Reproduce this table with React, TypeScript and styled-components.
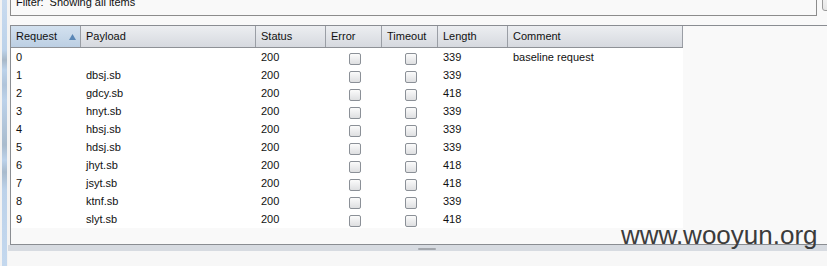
import React from "react";
import styled, { createGlobalStyle } from "styled-components";

const GlobalStyle = createGlobalStyle`
  html, body { margin: 0; padding: 0; background: #f9f9f9; }
  body { font-family: "Liberation Sans", Arial, sans-serif; font-size: 11px; color: #111; }
`;

const COLS = "70px 175px 70px 56px 56px 70px 175px";

const Page = styled.div`
  position: relative;
  width: 827px;
  height: 266px;
  overflow: hidden;
  display: flex;
  background: #f9f9f9;
`;

const LeftStrip = styled.div`
  width: 10px;
  flex: none;
  padding-left: 2px;
  box-sizing: border-box;
  background: #f3f3f3;
  display: flex;
`;

const StripBar = styled.div`
  width: 5px;
  background: linear-gradient(
    to bottom,
    #c9dbef 0px,
    #bcd2ea 50px,
    #a8b8c8 60px,
    #bcd2ea 70px,
    #b0c4da 85px,
    #bcd2ea 100px,
    #a9bbcd 145px,
    #bcd2ea 160px,
    #a9bbcd 172px,
    #bcd2ea 190px,
    #c4d8ee 266px
  );
`;

const Main = styled.div`
  flex: 1;
  display: flex;
  flex-direction: column;
  min-width: 0;
`;

const TopRow = styled.div`
  display: flex;
  align-items: flex-start;
  margin-top: -8px;
  height: 24px;
  flex: none;
`;

const FilterBox = styled.div`
  width: 807px;
  height: 24px;
  box-sizing: border-box;
  border: 1px solid #8c8c8c;
  background: #f9f9f9;
  padding: 3px 0 0 5px;
  line-height: 13px;
  white-space: pre;
  flex: none;
`;

const SideButton = styled.div`
  margin-left: 5px;
  width: 20px;
  height: 19px;
  box-sizing: border-box;
  border: 1px solid #9a9a9a;
  border-radius: 3px;
  background: linear-gradient(#f6f6f6, #e6e6e6);
  flex: none;
`;

const Gap = styled.div`
  height: 9px;
  flex: none;
`;

const TablePanel = styled.div`
  height: 220px;
  box-sizing: border-box;
  border-top: 1px solid #8a8d92;
  border-left: 1px solid #8a8d92;
  border-bottom: 1px solid #8a8d92;
  background: #f9f9f9;
  flex: none;
`;

const HeaderRow = styled.div`
  display: grid;
  grid-template-columns: ${COLS};
  width: 672px;
  height: 22px;
  box-sizing: border-box;
  border-bottom: 1px solid #8e9196;
`;

const HeaderCell = styled.div<{ $sorted?: boolean }>`
  box-sizing: border-box;
  height: 21px;
  line-height: 21px;
  padding-left: 5px;
  border-right: 1px solid #9a9ea5;
  background: ${(p) =>
    p.$sorted
      ? "linear-gradient(#d3e1ef, #bccfe3)"
      : "linear-gradient(#eceef1, #d6d9df)"};
  display: flex;
  align-items: center;
  justify-content: space-between;
  padding-right: 4px;
  white-space: nowrap;
`;

const SortArrow = styled.svg`
  width: 7px;
  height: 6px;
  display: block;
`;

const Row = styled.div`
  display: grid;
  grid-template-columns: ${COLS};
  width: 672px;
  height: 18px;
  background: #ffffff;
`;

const Cell = styled.div`
  line-height: 18px;
  padding-left: 5px;
  white-space: nowrap;
  overflow: hidden;
`;

const BoxCell = styled.div`
  display: flex;
  justify-content: center;
  align-items: flex-start;
  padding-top: 5px;
  padding-left: 1px;
  box-sizing: border-box;
`;

const CheckBox = styled.div`
  width: 12px;
  height: 12px;
  box-sizing: border-box;
  border: 1px solid #8b9097;
  border-radius: 2px;
  background: linear-gradient(#fbfbfb, #dedfe1);
`;

const Splitter = styled.div`
  height: 6px;
  margin-left: -2px;
  background: #d7dbe1;
  display: flex;
  align-items: flex-end;
  padding-left: 410px;
  flex: none;
`;

const Handle = styled.div`
  width: 18px;
  height: 2px;
  border-radius: 1px;
  background: #a3a7ad;
  margin-bottom: 1px;
`;

const BottomFill = styled.div`
  flex: 1;
  margin-left: -2px;
  background: #f7f7f7;
`;

const Watermark = styled.div`
  position: absolute;
  left: 621px;
  top: 222px;
  font-family: "Liberation Sans", Arial, sans-serif;
  font-size: 26px;
  line-height: 26px;
  color: #3c3c3c;
  white-space: nowrap;
  pointer-events: none;
`;

const rows = [
  { id: "0", payload: "", status: "200", length: "339", comment: "baseline request" },
  { id: "1", payload: "dbsj.sb", status: "200", length: "339", comment: "" },
  { id: "2", payload: "gdcy.sb", status: "200", length: "418", comment: "" },
  { id: "3", payload: "hnyt.sb", status: "200", length: "339", comment: "" },
  { id: "4", payload: "hbsj.sb", status: "200", length: "339", comment: "" },
  { id: "5", payload: "hdsj.sb", status: "200", length: "339", comment: "" },
  { id: "6", payload: "jhyt.sb", status: "200", length: "418", comment: "" },
  { id: "7", payload: "jsyt.sb", status: "200", length: "418", comment: "" },
  { id: "8", payload: "ktnf.sb", status: "200", length: "339", comment: "" },
  { id: "9", payload: "slyt.sb", status: "200", length: "418", comment: "" },
];

const headers = ["Request", "Payload", "Status", "Error", "Timeout", "Length", "Comment"];

export default function App() {
  return (
    <>
      <GlobalStyle />
      <Page>
        <LeftStrip>
          <StripBar />
        </LeftStrip>
        <Main>
          <TopRow>
            <FilterBox>Filter:  Showing all items</FilterBox>
            <SideButton />
          </TopRow>
          <Gap />
          <TablePanel>
            <HeaderRow>
              {headers.map((h, i) => (
                <HeaderCell key={h} $sorted={i === 0}>
                  <span>{h}</span>
                  {i === 0 && (
                    <SortArrow viewBox="0 0 7 6">
                      <polygon points="3.5,0 7,6 0,6" fill="#5a87b6" />
                    </SortArrow>
                  )}
                </HeaderCell>
              ))}
            </HeaderRow>
            {rows.map((r) => (
              <Row key={r.id}>
                <Cell>{r.id}</Cell>
                <Cell>{r.payload}</Cell>
                <Cell>{r.status}</Cell>
                <BoxCell>
                  <CheckBox />
                </BoxCell>
                <BoxCell>
                  <CheckBox />
                </BoxCell>
                <Cell>{r.length}</Cell>
                <Cell>{r.comment}</Cell>
              </Row>
            ))}
          </TablePanel>
          <Splitter>
            <Handle />
          </Splitter>
          <BottomFill />
        </Main>
        <Watermark>www.wooyun.org</Watermark>
      </Page>
    </>
  );
}
